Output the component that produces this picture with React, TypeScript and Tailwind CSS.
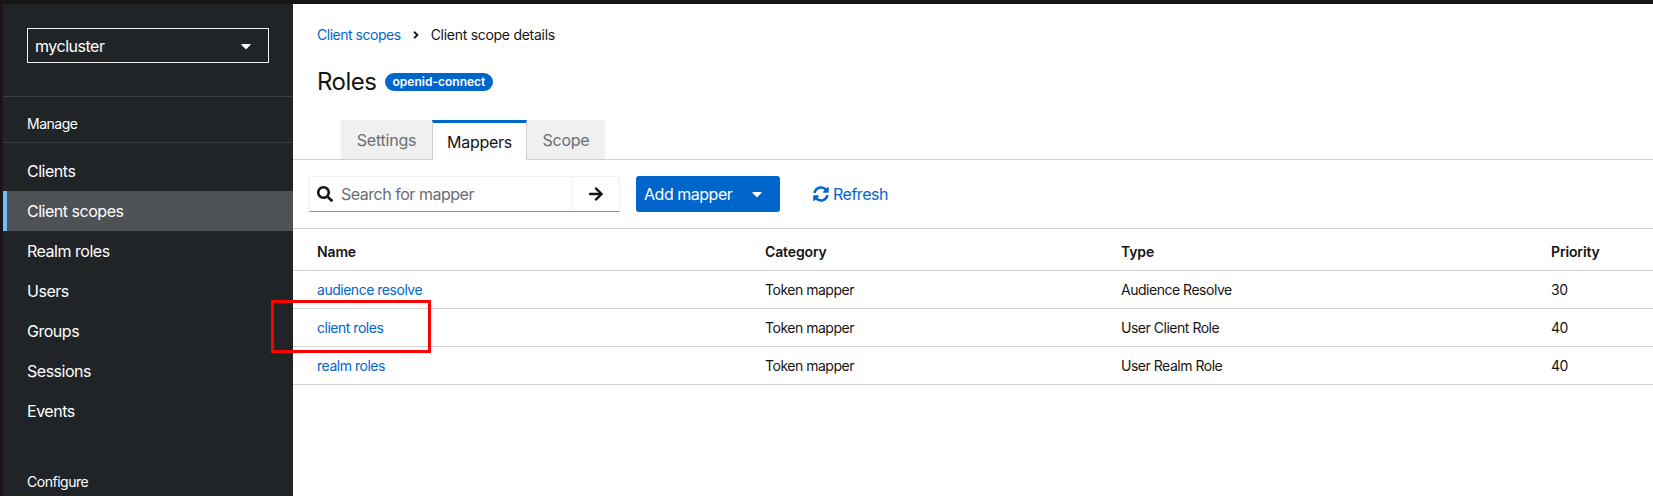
const font = "font-['Inter','Liberation_Sans',sans-serif] tracking-[-0.03em]";

function Caret({ className }: { className?: string }) {
  return (
    <svg viewBox="0 0 320 512" className={className} fill="currentColor">
      <path d="M31.3 192h257.3c17.8 0 26.7 21.5 14.1 34.1L174.1 354.8c-7.8 7.8-20.5 7.8-28.3 0L17.2 226.1C4.6 213.5 13.5 192 31.3 192z" />
    </svg>
  );
}

const nav = ["Clients", "Client scopes", "Realm roles", "Users", "Groups", "Sessions", "Events"];
const rows = [
  ["audience resolve", "Token mapper", "Audience Resolve", "30"],
  ["client roles", "Token mapper", "User Client Role", "40"],
  ["realm roles", "Token mapper", "User Realm Role", "40"],
];

function Row({ cells, head }: { cells: string[]; head?: boolean }) {
  return (
    <div className={`flex items-center border-b border-[#d2d2d2] pl-6 text-[#151515] ${head ? "h-[42px] pt-[4px] font-semibold tracking-[-0.01em]" : "h-[38px] pt-[1px]"}`}>
      {cells.map((c, i) => (
        <div key={i} className={i === 0 ? "w-[448px]" : i === 1 ? "w-[356px]" : i === 2 ? "w-[430px]" : "flex-1"}>
          {i === 0 && !head ? <span className="text-[#06c]">{c}</span> : c}
        </div>
      ))}
    </div>
  );
}

export default function App() {
  return (
    <div className={`relative flex h-[496px] w-[1653px] flex-col overflow-hidden bg-[#151515] ${font}`}>
      <div className="h-1 shrink-0" />
      <div className="flex min-h-0 flex-1">
        <div className="w-[3px] shrink-0 bg-[#1b1418]" />
        <aside className="flex w-[290px] shrink-0 flex-col bg-[#212427] text-white">
          <div className="h-[93px] shrink-0 border-b border-[#3c3f42] px-6 pt-6">
            <div className="flex h-[35px] w-[242px] items-center justify-between border border-[#f0f0f0] pl-[7px] pr-[17px] text-base">
              mycluster
              <Caret className="h-4 w-[10px]" />
            </div>
          </div>
          <div className="flex h-[46px] shrink-0 items-center border-b border-[#3c3f42] px-6 pt-[8px] text-sm">Manage</div>
          <nav className="flex flex-col pt-2 text-base">
            {nav.map((n) => (
              <div key={n} className={`flex h-10 items-center px-6 ${n === "Client scopes" ? "border-l-4 border-[#73bcf7] bg-[#4f5255] pl-5" : ""}`}>
                {n}
              </div>
            ))}
          </nav>
          <div className="pl-6 pt-[41px] text-sm">Configure</div>
        </aside>
        <main className="min-w-0 flex-1 bg-white text-sm text-[#151515]">
          <div className="flex h-[58px] items-center px-6 pt-[3px]">
            <span className="text-[#06c]">Client scopes</span>
            <svg viewBox="0 0 256 512" className="mx-[11px] h-3 w-2 text-[#151515]" fill="currentColor">
              <path d="M224.3 273l-136 136c-9.4 9.4-24.6 9.4-33.9 0l-22.6-22.6c-9.4-9.4-9.4-24.6 0-33.9l96.4-96.4-96.4-96.4c-9.4-9.4-9.4-24.6 0-33.9L54.3 103c9.4-9.4 24.6-9.4 33.9 0l136 136c9.5 9.4 9.5 24.6.1 34z" />
            </svg>
            <span className="tracking-[-0.02em]">Client scope details</span>
          </div>
          <div className="flex h-10 items-center gap-2 px-6">
            <h1 className="text-[24px] font-normal leading-none tracking-[-0.02em]">Roles</h1>
            <span className="flex h-[18px] items-center rounded-full bg-[#06c] px-2 text-xs font-semibold tracking-normal text-white">openid-connect</span>
          </div>
          <div className="mt-[18px] flex h-10 border-b border-[#d2d2d2] pl-12 text-base tracking-[-0.015em]">
            <div className="flex w-[91px] items-center justify-center bg-[#f0f0f0] text-[#6a6e73]">Settings</div>
            <div className="-mb-px flex w-[95px] items-center justify-center border-x border-[#d2d2d2] border-t-[3px] border-t-[#06c] bg-white">Mappers</div>
            <div className="flex w-[78px] items-center justify-center bg-[#f0f0f0] text-[#6a6e73]">Scope</div>
          </div>
          <div className="flex h-[69px] items-start border-b border-[#d2d2d2] pl-4 pt-4 text-base">
            <div className="flex h-9 w-[311px] border border-[#f0f0f0] border-b-[#8a8d90]">
              <div className="flex flex-1 items-center gap-2 border-r border-[#f0f0f0] pl-[7px]">
                <svg viewBox="0 0 512 512" className="h-4 w-4" fill="currentColor">
                  <path d="M505 442.7L405.3 343c-4.5-4.5-10.6-7-17-7H372c27.6-35.3 44-79.7 44-128C416 93.1 322.9 0 208 0S0 93.1 0 208s93.1 208 208 208c48.3 0 92.7-16.4 128-44v16.3c0 6.4 2.5 12.5 7 17l99.7 99.7c9.4 9.4 24.6 9.4 33.9 0l28.3-28.3c9.4-9.4 9.4-24.6.1-34zM208 336c-70.7 0-128-57.2-128-128 0-70.7 57.2-128 128-128 70.7 0 128 57.2 128 128 0 70.7-57.2 128-128 128z" />
                </svg>
                <span className="text-[#6a6e73]">Search for mapper</span>
              </div>
              <div className="flex w-[47px] items-center justify-center">
                <svg viewBox="0 0 448 512" className="h-4 w-[14px]" fill="currentColor">
                  <path d="M190.5 66.9l22.2-22.2c9.4-9.4 24.6-9.4 33.9 0L441 239c9.4 9.4 9.4 24.6 0 33.9L246.6 467.3c-9.4 9.4-24.6 9.4-33.9 0l-22.2-22.2c-9.5-9.5-9.3-25 .4-34.3L311.4 296H24c-13.3 0-24-10.7-24-24v-32c0-13.3 10.7-24 24-24h287.4L190.9 101.2c-9.8-9.3-10-24.8-.4-34.3z" />
                </svg>
              </div>
            </div>
            <div className="ml-4 flex h-9 w-[144px] items-center justify-between rounded-[3px] bg-[#06c] pl-2 pr-[18px] text-white">
              Add mapper
              <Caret className="h-4 w-[10px]" />
            </div>
            <div className="ml-[33px] flex h-9 items-center gap-[4px] text-[#06c]">
              <svg viewBox="0 0 512 512" className="h-4 w-4" fill="currentColor">
                <path d="M370.72 133.28C339.458 104.008 298.888 87.962 255.848 88c-77.458.068-144.328 53.178-162.791 126.85-1.344 5.363-6.122 9.15-11.651 9.15H24.103c-7.498 0-13.194-6.807-11.807-14.176C33.933 94.924 134.813 8 256 8c66.448 0 126.791 26.136 171.315 68.685L463.03 40.97C478.149 25.851 504 36.559 504 57.941V192c0 13.255-10.745 24-24 24H345.941c-21.382 0-32.09-25.851-16.971-40.971l41.75-41.749zM32 296h134.059c21.382 0 32.09 25.851 16.971 40.971l-41.75 41.75c31.262 29.273 71.835 45.319 114.876 45.28 77.418-.07 144.315-53.144 162.787-126.849 1.344-5.363 6.122-9.15 11.651-9.15h57.304c7.498 0 13.194 6.807 11.807 14.176C478.067 417.076 377.187 504 256 504c-66.448 0-126.791-26.136-171.315-68.685L48.97 471.03C33.851 486.149 8 475.441 8 454.059V320c0-13.255 10.745-24 24-24z" />
              </svg>
              Refresh
            </div>
          </div>
          <Row head cells={["Name", "Category", "Type", "Priority"]} />
          {rows.map((r) => (
            <Row key={r[0]} cells={r} />
          ))}
        </main>
      </div>
      <div className="absolute left-[271px] top-[300px] h-[53px] w-[160px] border-[3px] border-[#f00]" />
    </div>
  );
}
